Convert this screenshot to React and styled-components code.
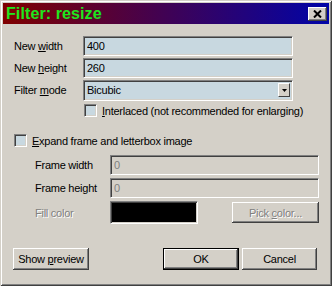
import React from 'react'
import styled, { createGlobalStyle } from 'styled-components'

const GlobalStyle = createGlobalStyle`
  html, body {
    margin: 0;
    padding: 0;
    background: #d4d0c8;
  }
  body {
    font-family: "Liberation Sans", Arial, sans-serif;
    font-size: 11px;
    letter-spacing: -0.25px;
    color: #000;
  }
`

function Dialog() {
  return (
    <Window>
      <TitleBar>
        <Title>Filter: resize</Title>
        <CloseButton>
          <svg width="9" height="8" viewBox="0 0 9 8">
            <path d="M1 0.5 L8 7.5 M8 0.5 L1 7.5" stroke="#000" strokeWidth="2" />
          </svg>
        </CloseButton>
      </TitleBar>

      <Body>
        <FieldGrid>
          <Label>New <u>w</u>idth</Label>
          <TextField readOnly defaultValue="400" />
          <Label>New <u>h</u>eight</Label>
          <TextField readOnly defaultValue="260" />
          <Label>Filter <u>m</u>ode</Label>
          <Combo>
            <span>Bicubic</span>
            <ComboButton>
              <svg width="5" height="3" viewBox="0 0 5 3">
                <path d="M0 0 H5 L2.5 3 Z" fill="#000" />
              </svg>
            </ComboButton>
          </Combo>
        </FieldGrid>

        <CheckRow $indent={70} $top={4}>
          <CheckBox />
          <span><u>I</u>nterlaced (not recommended for enlarging)</span>
        </CheckRow>

        <CheckRow $indent={0} $top={17}>
          <CheckBox />
          <span><u>E</u>xpand frame and letterbox image</span>
        </CheckRow>

        <FrameGrid>
          <Label>Frame width</Label>
          <TextField readOnly defaultValue="0" disabled />
          <Label>Frame height</Label>
          <TextField readOnly defaultValue="0" disabled />
          <Label $disabled>Fill color</Label>
          <ColorRow>
            <Swatch />
            <Button $width={87} $height={21} disabled>
              Pick <u>c</u>olor...
            </Button>
          </ColorRow>
        </FrameGrid>

        <Footer>
          <Button $width={76}>Show <u>p</u>review</Button>
          <ButtonGroup>
            <Button $width={76} $default>OK</Button>
            <Button $width={75}>Cancel</Button>
          </ButtonGroup>
        </Footer>
      </Body>
    </Window>
  )
}

export default function App() {
  return (
    <>
      <GlobalStyle />
      <Dialog />
    </>
  )
}

const Window = styled.div`
  width: 332px;
  height: 286px;
  box-sizing: border-box;
  padding: 3px;
  background: #d4d0c8;
  box-shadow: inset 1px 1px #d4d0c8, inset -1px -1px #404040,
    inset 2px 2px #ffffff, inset -2px -2px #808080;
  display: flex;
  flex-direction: column;
`

const TitleBar = styled.div`
  height: 21px;
  display: flex;
  align-items: center;
  justify-content: space-between;
  padding: 0 2px 0 3px;
  background: linear-gradient(to right, #800000, #0004a8);
`

const Title = styled.div`
  font-family: "Liberation Sans", Arial, sans-serif;
  font-weight: bold;
  font-size: 16px;
  letter-spacing: 0.1px;
  color: #1ee61e;
`

const CloseButton = styled.div`
  width: 19px;
  height: 14px;
  box-sizing: border-box;
  background: #d4d0c8;
  box-shadow: inset -1px -1px #404040, inset 1px 1px #ffffff,
    inset -2px -2px #808080;
  display: flex;
  align-items: center;
  justify-content: center;
  margin-top: 1px;
`

const Body = styled.div`
  flex: 1;
  padding: 12px 0 0 11px;
  display: flex;
  flex-direction: column;
`

const FieldGrid = styled.div`
  display: grid;
  grid-template-columns: 69px 210px;
  grid-auto-rows: 20px;
  row-gap: 2px;
  align-items: center;
`

const Label = styled.span`
  color: ${(p) => (p.$disabled ? '#808080' : '#000')};
  text-shadow: ${(p) => (p.$disabled ? '1px 1px #ffffff' : 'none')};
  white-space: nowrap;
`

const sunken = `
  box-sizing: border-box;
  border: 1px solid;
  border-color: #808080 #ffffff #ffffff #808080;
  box-shadow: inset 1px 1px #404040, inset -1px -1px #d4d0c8;
`

const TextField = styled.input`
  ${sunken}
  height: 20px;
  width: 100%;
  margin: 0;
  padding: 0 0 0 3px;
  font-family: "Liberation Sans", Arial, sans-serif;
  font-size: 11px;
  letter-spacing: -0.25px;
  color: #000;
  background: #c8d8e0;
  outline: none;

  &:disabled {
    background: #d4d0c8;
    color: #808080;
  }
`

const Combo = styled.div`
  ${sunken}
  height: 21px;
  background: #c8d8e0;
  display: flex;
  align-items: center;
  justify-content: space-between;
  padding: 0 2px 0 3px;
`

const ComboButton = styled.div`
  width: 12px;
  height: 14px;
  box-sizing: border-box;
  background: #d4d0c8;
  border: 1px solid;
  border-color: #ffffff #404040 #404040 #ffffff;
  display: flex;
  align-items: center;
  justify-content: center;
`

const CheckRow = styled.label`
  display: flex;
  align-items: center;
  gap: 5px;
  height: 13px;
  margin-top: ${(p) => p.$top}px;
  padding-left: ${(p) => p.$indent}px;
  white-space: nowrap;
`

const CheckBox = styled.span`
  ${sunken}
  width: 13px;
  height: 13px;
  flex: none;
  background: #c8d8e0;
`

const FrameGrid = styled.div`
  display: grid;
  grid-template-columns: 75px 209px;
  grid-template-rows: 20px 20px 23px;
  row-gap: 3px;
  align-items: center;
  margin-top: 8px;
  padding-left: 21px;
`

const ColorRow = styled.div`
  display: flex;
  align-items: center;
  justify-content: space-between;
`

const Swatch = styled.div`
  ${sunken}
  width: 88px;
  height: 23px;
  background: #000;
`

const Button = styled.button`
  width: ${(p) => p.$width}px;
  height: ${(p) => p.$height || 22}px;
  box-sizing: border-box;
  margin: 0;
  padding: 0;
  border: ${(p) => (p.$default ? '1px solid #000' : 'none')};
  background: #d4d0c8;
  box-shadow: inset -1px -1px #404040, inset 1px 1px #ffffff,
    inset -2px -2px #808080;
  font-family: "Liberation Sans", Arial, sans-serif;
  font-size: 11px;
  letter-spacing: -0.25px;
  color: #000;

  &:disabled {
    color: #808080;
    text-shadow: 1px 1px #ffffff;
  }
`

const Footer = styled.div`
  display: flex;
  justify-content: space-between;
  align-items: center;
  margin-top: 24px;
  margin-left: -1px;
  width: 304px;
`

const ButtonGroup = styled.div`
  display: flex;
  gap: 3px;
`
